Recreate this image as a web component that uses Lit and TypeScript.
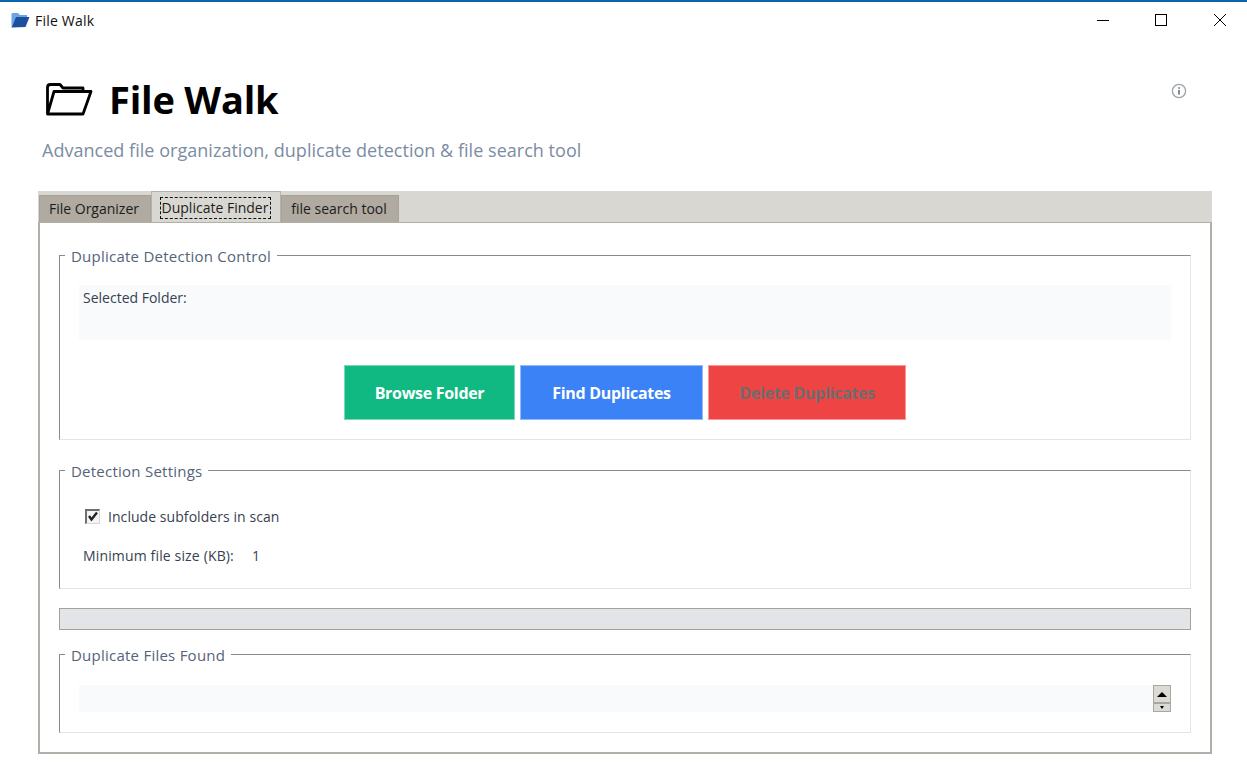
import { LitElement, html, css } from "lit";
import { customElement } from "lit/decorators.js";

@customElement("app-root")
export class AppRoot extends LitElement {
  static styles = css`
    :host {
      display: block;
      width: 1247px;
      height: 775px;
      background: #fff;
      font-family: "Open Sans", "Noto Sans", sans-serif;
      color: #1f2937;
      overflow: hidden;
    }
    .accent { height: 2px; background: #0b63a8; }
    .titlebar {
      height: 38px;
      box-sizing: border-box;
      display: flex;
      align-items: center;
      padding: 0 2px 2px 11px;
      font-size: 14px;
      color: #111;
    }
    .titlebar .app-icon { width: 19px; height: 16px; margin-right: 5px; }
    .titlebar .name { flex: 1; letter-spacing: 0.2px; }
    .winctl { display: flex; align-items: center; }
    .winctl svg { display: block; width: 58.5px; height: 14px; }
    .header {
      display: flex;
      justify-content: space-between;
      padding: 0 60px 0 42px;
      height: 151px;
    }
    .head-left { display: flex; flex-direction: column; }
    .title-row { display: flex; align-items: center; height: 80px; padding-top: 2px; box-sizing: border-box; margin-top: 18px; }
    .title-row svg { width: 52px; height: 40px; margin-right: 15px; }
    h1 { margin: 0; font-size: 38px; font-weight: 700; color: #000; letter-spacing: -0.2px; line-height: 44px; }
    .subtitle { font-size: 18px; color: #7b8ca3; letter-spacing: 0.03px; line-height: 24px; }
    .info { width: 16px; height: 16px; margin-top: 43px; }
    .notebook { margin: 0 35px 0 38px; height: 563px; display: flex; flex-direction: column; }
    .tabstrip { height: 31px; background: #d9d7d1; display: flex; align-items: flex-end; padding-left: 1px; flex: none; }
    .tab {
      height: 27px;
      box-sizing: border-box;
      background: #b1aaa0;
      border: 1px solid #a6a297;
      border-bottom: 0;
      padding: 0 2px 2px 0;
      font-size: 14px;
      color: #1c1c1c;
      display: flex;
      align-items: center;
      justify-content: center;
    }
    .tab.one { width: 112px; }
    .tab.two { width: 130px; height: 31px; background: #d9d7d1; border-color: #b5b2a8; padding: 1px 2px 0 0; }
    .tab.three { width: 118px; }
    .focus { border: 1px dashed #111; line-height: 20px; width: 111px; text-align: center; white-space: nowrap; box-sizing: border-box; }
    .panel {
      flex: 1;
      box-sizing: border-box;
      border: 2px solid #b1b0a8;
      border-top: 1px solid #b1b0a8;
      padding: 20px 19px 0 19px;
      display: flex;
      flex-direction: column;
    }
    fieldset {
      margin: 0;
      padding: 0 19px;
      min-width: 0;
      border: 1px solid #e4e4e4;
      border-top-color: #8a8a8a;
      border-left-color: #8a8a8a;
      box-sizing: border-box;
      display: block;
      flex: none;
    }
    legend {
      margin-left: -14px;
      padding: 3px 6px 1px;
      font-size: 15px;
      line-height: 20px;
      color: #556378;
      letter-spacing: 0.24px;
    }
    .group-control { height: 197px; }
    .group-settings { height: 131px; margin-top: 18px; }
    .group-results { height: 91px; margin-top: 12px; }
    .selected {
      height: 55px;
      margin-top: 18px;
      background: #f8fafc;
      padding: 3px 4px;
      box-sizing: border-box;
      font-size: 14px;
      line-height: 20px;
      color: #374151;
    }
    .buttons { display: flex; justify-content: center; gap: 5px; margin-top: 25px; }
    .btn {
      height: 55px;
      box-sizing: border-box;
      border: 1px solid rgba(255,255,255,0.45);
      font: 700 16px/1 "Open Sans", "Noto Sans", sans-serif;
      letter-spacing: -0.3px;
      color: #fff;
      padding: 0;
    }
    .browse { width: 171px; background: #10b981; }
    .find { width: 183px; background: #3b82f6; }
    .delete { width: 198px; background: #ef4444; color: #6d6d6d; }
    .check-row { display: flex; align-items: center; margin-top: 24px; margin-left: 6px; font-size: 14px; letter-spacing: 0.06px; color: #374151; height: 20px; }
    .box {
      width: 15px; height: 15px; box-sizing: border-box; margin-right: 8px;
      border: 1px solid #d8d8d8; border-top: 2px solid #6f6f6f; border-left: 2px solid #6f6f6f;
      background: #f4f4f4; display: flex;
    }
    .box svg { width: 11px; height: 11px; }
    .size-row { display: flex; margin: 19px 0 0 4px; height: 20px; align-items: center; font-size: 14px; letter-spacing: 0.15px; color: #374151; }
    .size-row .label { width: 169px; }
    .progress { height: 22px; flex: none; margin-top: 19px; box-sizing: border-box; background: #e2e4e8; border: 1.5px solid #a3a297; border-top-width: 1px; border-left-width: 1px; }
    .listrow { display: flex; margin-top: 19px; height: 27px; }
    .list { flex: 1; background: #f8fafc; }
    .scroll { width: 18px; display: flex; flex-direction: column; }
    .arrow {
      box-sizing: border-box;
      background: #dcdad4;
      border: 1px solid #a9a89f;
      display: flex; align-items: center; justify-content: center;
    }
    .arrow.up { height: 18px; }
    .arrow.down { height: 9px; }
    .up i { width: 0; height: 0; border: 5px solid transparent; border-top: 0; border-bottom: 5px solid #000; }
    .down i { width: 0; height: 0; border: 2.5px solid transparent; border-bottom: 0; border-top: 3px solid #000; }
  `;

  render() {
    return html`
      <div class="accent"></div>
      <div class="titlebar">
        <svg class="app-icon" viewBox="0 0 19 16">
          <path d="M0.5 15 L0.5 2 Q0.5 1 1.5 1 L7 1 L9 3 L16 3 L16 6 L5 6 Z" fill="#6aa5e8" />
          <path d="M0.5 15.5 L5 5 L18.5 5 L14.5 15 Z" fill="#1c4f9c" />
        </svg>
        <span class="name">File Walk</span>
        <div class="winctl">
          <svg viewBox="0 0 58.5 14"><path d="M27 7.5 H39" stroke="#000" fill="none" /></svg>
          <svg viewBox="0 0 58.5 14"><rect x="27.5" y="1.5" width="11" height="11" stroke="#000" fill="none" /></svg>
          <svg viewBox="0 0 58.5 14"><path d="M27 1 L39 13 M39 1 L27 13" stroke="#000" fill="none" /></svg>
        </div>
      </div>
      <div class="header">
        <div class="head-left">
          <div class="title-row">
            <svg viewBox="0 0 52 40">
              <path d="M5.5 35 V8.5 Q5.5 5.5 8.5 5.5 H18 L21 9 H41 V12.5 M12 12.5 H49 L41 35 H5.5 Z" fill="none" stroke="#000" stroke-width="2.8" stroke-linejoin="round" />
            </svg>
            <h1>File Walk</h1>
          </div>
          <div class="subtitle">Advanced file organization, duplicate detection &amp; file search tool</div>
        </div>
        <svg class="info" viewBox="0 0 16 16">
          <circle cx="8" cy="8" r="6.6" fill="none" stroke="#9aa3a8" stroke-width="1.3" />
          <rect x="7.2" y="7" width="1.6" height="4.6" fill="#6d7378" />
          <rect x="7.2" y="4.2" width="1.6" height="1.6" fill="#6d7378" />
        </svg>
      </div>
      <div class="notebook">
        <div class="tabstrip">
          <div class="tab one">File Organizer</div>
          <div class="tab two"><span class="focus">Duplicate Finder</span></div>
          <div class="tab three">file search tool</div>
        </div>
        <div class="panel">
          <fieldset class="group-control">
            <legend>Duplicate Detection Control</legend>
            <div class="selected">Selected Folder:</div>
            <div class="buttons">
              <button class="btn browse">Browse Folder</button>
              <button class="btn find">Find Duplicates</button>
              <button class="btn delete">Delete Duplicates</button>
            </div>
          </fieldset>
          <fieldset class="group-settings">
            <legend>Detection Settings</legend>
            <div class="check-row">
              <span class="box"><svg viewBox="0 0 11 11"><path d="M2 5 L4.5 8.5 L10 1.5" fill="none" stroke="#222" stroke-width="2.4" /></svg></span>
              Include subfolders in scan
            </div>
            <div class="size-row"><span class="label">Minimum file size (KB):</span><span>1</span></div>
          </fieldset>
          <div class="progress"></div>
          <fieldset class="group-results">
            <legend>Duplicate Files Found</legend>
            <div class="listrow">
              <div class="list"></div>
              <div class="scroll">
                <div class="arrow up"><i></i></div>
                <div class="arrow down"><i></i></div>
              </div>
            </div>
          </fieldset>
        </div>
      </div>
    `;
  }
}
